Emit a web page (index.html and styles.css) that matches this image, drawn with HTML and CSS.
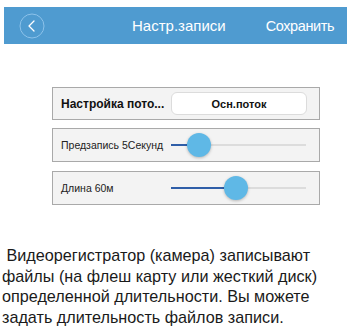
FILE: index.html
```html
<!DOCTYPE html>
<html lang="ru">
<head>
<meta charset="utf-8">
<link rel="stylesheet" href="styles.css">
</head>
<body>
<header class="bar">
  <div class="back">
    <svg width="26" height="26" viewBox="0 0 26 26"><circle cx="13" cy="13" r="12" fill="none" stroke="#8cc2ea" stroke-width="1"/><path d="M15 8 L10 13 L15 18" fill="none" stroke="#ffffff" stroke-width="1.3" stroke-linecap="round" stroke-linejoin="round"/></svg>
  </div>
  <div class="title">Настр.записи</div>
  <div class="save">Сохранить</div>
</header>
<main class="settings">
  <div class="row">
    <span class="label bold">Настройка пото...</span>
    <button class="pick">Осн.поток</button>
  </div>
  <div class="row">
    <span class="label">Предзапись 5Секунд</span>
    <div class="slider"><div class="track"><div class="fill" style="width:28px"></div><div class="thumb" style="left:28px"></div></div></div>
  </div>
  <div class="row">
    <span class="label">Длина 60м</span>
    <div class="slider"><div class="track"><div class="fill" style="width:65px"></div><div class="thumb" style="left:65px"></div></div></div>
  </div>
</main>
<p class="desc">&nbsp;Видеорегистратор (камера) записывают<br>файлы (на флеш карту или жесткий диск)<br>определенной длительности. Вы можете<br>задать длительность файлов записи.</p>
</body>
</html>
```
FILE: styles.css
```css
html, body { margin: 0; padding: 0; background: #fff; }
body { width: 350px; height: 332px; overflow: hidden; font-family: "Liberation Sans", Arial, sans-serif; }
.bar {
  margin: 7px 3px 0 4px;
  height: 37px;
  background: #4f9bd0;
  display: flex;
  align-items: center;
  color: #fff;
  font-size: 15px;
}
.back { width: 26px; height: 26px; margin-left: 15px; display: flex; }
.title { margin-left: 87px; }
.save { margin-left: 40px; font-size: 14.5px; letter-spacing: -0.4px; }
.settings {
  margin: 43px 0 0 52px;
  width: 268px;
  display: flex;
  flex-direction: column;
  gap: 8px;
}
.row {
  box-sizing: border-box;
  height: 33px;
  border: 1px solid #a9a9a9;
  background: #f3f3f3;
  display: flex;
  align-items: center;
  padding-left: 8px;
}
.row + .row { height: 34px; }
.row:nth-child(3) { margin-top: 1px; }
.label { font-size: 10.5px; color: #222; width: 110px; white-space: nowrap; }
.label.bold { font-weight: bold; font-size: 12px; color: #111; }
.pick {
  margin-left: 0;
  width: 136px;
  height: 23px;
  border: 1px solid #dcdcdc;
  border-radius: 6px;
  background: #fff;
  font: bold 11px "Liberation Sans", Arial, sans-serif;
  color: #111;
  padding: 0;
}
.slider { flex: 1; padding-right: 13px; }
.track { position: relative; height: 2px; background: #dcdcdc; }
.fill { height: 2px; background: #2f5ea8; }
.thumb {
  position: absolute;
  top: -11px;
  width: 24px;
  height: 24px;
  margin-left: -12px;
  border-radius: 50%;
  background: #5fb8e6;
  box-shadow: 0 1px 3px rgba(0,0,0,0.25);
}
.desc {
  margin: 40px 0 0 2px;
  font-size: 16.2px;
  line-height: 20.5px;
  color: #1a1a1a;
}
```
